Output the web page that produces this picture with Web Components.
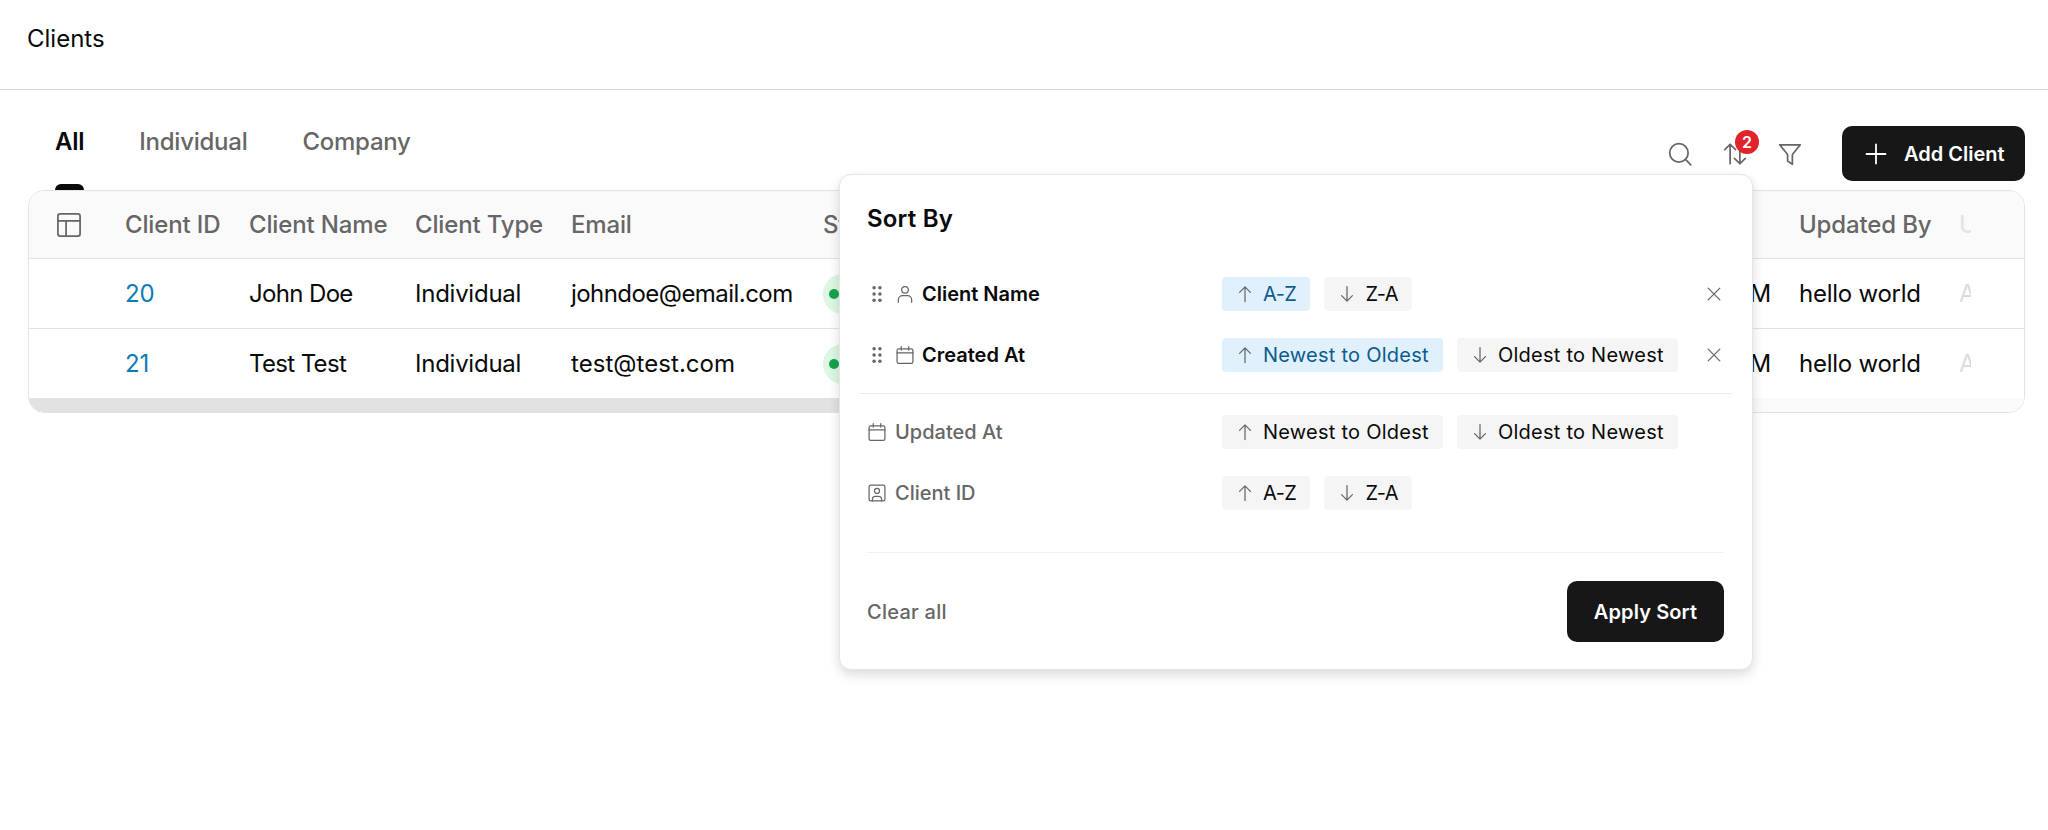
<!DOCTYPE html>
<html lang="en"><head><meta charset="utf-8"><title>Clients</title>
<style>
html,body{margin:0;padding:0;background:#fff}
body{font-family:Inter,"Noto Sans",sans-serif;color:#0a0a0a;position:relative;height:830px;overflow:hidden;font-size:24px;
--cols:96px 124px 166px 156px 252px 300px 676px 160px 12px 1fr}
</style></head><body>
<app-header>Clients</app-header>
<tab-toolbar>
  <tab-item active>All</tab-item><tab-item>Individual</tab-item><tab-item>Company</tab-item>
  <tool-bar slot="tools" badge="2"></tool-bar>
</tab-toolbar>
<client-table>
  <table-row head>
    <table-cell><ui-icon name="table" size="28" color="#666"></ui-icon></table-cell>
    <table-cell>Client ID</table-cell><table-cell>Client Name</table-cell><table-cell>Client Type</table-cell><table-cell>Email</table-cell>
    <table-cell>Status</table-cell><table-cell>Created At</table-cell><table-cell>Updated By</table-cell><table-cell clip>Updated At</table-cell><table-cell></table-cell>
  </table-row>
  <table-row>
    <table-cell></table-cell><table-cell link>20</table-cell><table-cell tight>John Doe</table-cell><table-cell>Individual</table-cell><table-cell mail>johndoe@email.com</table-cell>
    <table-cell><status-pill>Active</status-pill></table-cell><table-cell end>12:00 PM</table-cell><table-cell>hello world</table-cell><table-cell clip>Active</table-cell><table-cell></table-cell>
  </table-row>
  <table-row last>
    <table-cell></table-cell><table-cell link>21</table-cell><table-cell tight>Test Test</table-cell><table-cell>Individual</table-cell><table-cell wide>test@test.com</table-cell>
    <table-cell><status-pill>Active</status-pill></table-cell><table-cell end>12:00 PM</table-cell><table-cell>hello world</table-cell><table-cell clip>Active</table-cell><table-cell></table-cell>
  </table-row>
</client-table>
<sort-popover>
  <sort-row active icon="user" label="Client Name" a="A-Z" b="Z-A" on="a"></sort-row>
  <sort-row active icon="calendar" label="Created At" a="Newest to Oldest" b="Oldest to Newest" on="a"></sort-row>
  <sort-row slot="rest" icon="calendar" label="Updated At" a="Newest to Oldest" b="Oldest to Newest"></sort-row>
  <sort-row slot="rest" icon="idcard" label="Client ID" a="A-Z" b="Z-A"></sort-row>
</sort-popover>
<script>
const ICONS={
 table:'<rect x="2.5" y="2.5" width="19" height="19" rx="2"/><path d="M2.5 8.5h19M9.5 8.5v13"/>',
 user:'<circle cx="12" cy="7" r="4"/><path d="M4 22v-3a5 5 0 0 1 5-5h6a5 5 0 0 1 5 5v3"/>',
 calendar:'<rect x="2.5" y="4.5" width="19" height="17.5" rx="2"/><path d="M2.5 9.5h19M7.5 2v4M16.5 2v4"/>',
 idcard:'<rect x="2.5" y="2.5" width="19" height="19" rx="2"/><circle cx="12" cy="9.5" r="3"/><path d="M6.5 21.5v-2a3.5 3.5 0 0 1 3.5-3.5h4a3.5 3.5 0 0 1 3.5 3.5v2"/>',
 up:'<path d="M12 21V3.5M5.5 10 12 3.5 18.5 10"/>',
 down:'<path d="M12 3v17.5M5.5 14 12 20.5 18.5 14"/>',
 close:'<path d="M5 5l14 14M19 5 5 19"/>',
 plus:'<path d="M12 2.5v19M2.5 12h19"/>',
 search:'<circle cx="11" cy="11" r="8.5"/><path d="M17.5 17.5 22 22"/>',
 filter:'<path d="M2.5 3.5h19l-7.3 9v9l-4.4-3v-6z"/>',
 sort:'<path d="M7.5 21V3M2.5 8l5-5 5 5M16.5 3v18M11.5 16l5 5 5-5"/>',
 drag:'<g fill="currentColor" stroke="none"><circle cx="8.5" cy="4.5" r="2.1"/><circle cx="15.5" cy="4.5" r="2.1"/><circle cx="8.5" cy="12" r="2.1"/><circle cx="15.5" cy="12" r="2.1"/><circle cx="8.5" cy="19.5" r="2.1"/><circle cx="15.5" cy="19.5" r="2.1"/></g>'
};
function def(name,html){
  customElements.define(name,class extends HTMLElement{
    constructor(){super();this.attachShadow({mode:'open'}).innerHTML=html;}
  });
}
customElements.define('ui-icon',class extends HTMLElement{
  static get observedAttributes(){return ['name'];}
  connectedCallback(){this.draw();}
  attributeChangedCallback(){this.draw();}
  draw(){
    const s=this.getAttribute('size')||20,c=this.getAttribute('color')||'#666',w=this.getAttribute('stroke')||1.5;
    if(!this.shadowRoot)this.attachShadow({mode:'open'});
    this.shadowRoot.innerHTML=`<style>:host{display:inline-flex;flex:none;width:${s}px;height:${s}px;color:${c}}svg{display:block;width:100%;height:100%}</style><svg viewBox="0 0 24 24" fill="none" stroke="currentColor" stroke-width="${w}" stroke-linecap="round" stroke-linejoin="round">${ICONS[this.getAttribute('name')]||''}</svg>`;
  }
});
def('app-header',`<style>:host{display:flex;align-items:center;padding:0 27px 13px;box-sizing:border-box;height:90px;border-bottom:1px solid #d9d9d9;font-size:24px;font-weight:400;color:#0a0a0a}</style><slot></slot>`);
def('tab-toolbar',`<style>:host{display:flex;justify-content:space-between;height:100px;padding:0 23px 0 55px}
.tabs{display:flex;gap:55px}.tools{padding-top:36px}</style><div class="tabs"><slot></slot></div><div class="tools"><slot name="tools"></slot></div>`);
def('tab-item',`<style>:host{display:flex;flex-direction:column;justify-content:space-between;padding-top:37px;font-size:24px;line-height:30px;font-weight:500;color:#666;letter-spacing:-.25px}
:host([active]){color:#0a0a0a;font-weight:600}
i{display:none;height:6px;background:#0a0a0a;border-radius:6px 6px 0 0}:host([active]) i{display:block}</style><slot></slot><i></i>`);
def('tool-bar',`<style>:host{display:flex;align-items:center;height:55px}
.ic{position:relative;display:flex;width:24px;height:24px;margin-right:31px}
.ic ui-icon{margin:-1px}
b{position:absolute;left:12px;top:-12px;width:24px;height:24px;border-radius:50%;background:#e0242a;color:#fff;font:600 16px/24px Inter,sans-serif;text-align:center}
button{display:flex;align-items:center;gap:16px;width:183px;height:55px;margin-left:40px;padding:0 0 0 22px;box-sizing:border-box;border:0;border-radius:10px;background:#171717;color:#fff;font:600 20px Inter,sans-serif}
</style><span class="ic"><ui-icon name="search" size="26" stroke="1.6"></ui-icon></span><span class="ic"><ui-icon name="sort" size="26" stroke="1.6"></ui-icon><b>2</b></span><span class="ic" style="margin-right:0"><ui-icon name="filter" size="26" stroke="1.6"></ui-icon></span><button><ui-icon name="plus" size="24" color="#fff" stroke="1.8"></ui-icon>Add Client</button>`);
def('client-table',`<style>:host{display:block;margin:0 23px 0 28px;height:223px;box-sizing:border-box;border:1.5px solid #e3e3e3;border-radius:16px;overflow:hidden;position:relative;background:#fff}
.bar{height:14px;background:#fafafa}.bar i{display:block;height:100%;width:60%;background:#e2e2e2}</style><slot></slot><div class="bar"><i></i></div>`);
def('table-row',`<style>:host{display:grid;grid-template-columns:var(--cols);align-items:center;height:70px;border-bottom:1.5px solid #e3e3e3;box-sizing:border-box;font-size:24px;color:#0a0a0a;letter-spacing:-.25px}
:host([head]){height:68px;background:#fafafa;color:#666;font-weight:500;letter-spacing:-.15px}:host([last]){border-bottom:0;height:69px}</style><slot></slot>`);
def('table-cell',`<style>:host{display:block;white-space:nowrap;line-height:30px;min-width:0}
:host(:first-child){padding-left:26px;display:flex}
:host([link]){color:#0a7cb8}:host([mail]){letter-spacing:-.55px}:host([tight]){letter-spacing:-.65px}:host([wide]){letter-spacing:.05px}:host([end]){text-align:right;padding-right:28px}:host([clip]){overflow:hidden;opacity:.14}</style><slot></slot>`);
def('status-pill',`<style>:host{display:inline-flex;align-items:center;gap:8px;height:40px;padding:0 16px 0 6px;border-radius:20px;background:#dcf7e3;color:#15803d;font-size:20px;vertical-align:middle}
i{width:10px;height:10px;border-radius:50%;background:#16a34a}</style><i></i><slot></slot>`);
def('sort-popover',`<style>:host{position:absolute;left:839px;top:174px;width:914px;box-sizing:border-box;padding:29px 28px 27px 27px;background:#fff;border:1.5px solid #e5e5e5;border-radius:12px;box-shadow:0 5px 12px rgba(0,0,0,.14)}
h2{margin:0 0 43px;font:600 24px/30px Inter,sans-serif;color:#0a0a0a;letter-spacing:.2px}
.g{display:flex;flex-direction:column;gap:27px}
.d1{height:1px;background:#ececec;margin:21px -8px}
.d2{height:1px;background:#f0f0f0;margin:42px 0 28px}
.f{display:flex;justify-content:space-between;align-items:center}
span{font-size:20px;font-weight:500;color:#666;letter-spacing:.25px}
button{width:157px;height:61px;border:0;border-radius:10px;background:#171717;color:#fff;font:600 20px Inter,sans-serif;letter-spacing:.1px}
</style><h2>Sort By</h2><div class="g"><slot></slot></div><div class="d1"></div><div class="g"><slot name="rest"></slot></div><div class="d2"></div><div class="f"><span>Clear all</span><button>Apply Sort</button></div>`);
def('sort-chip',`<style>:host{display:inline-flex;align-items:center;gap:8px;height:34px;padding:0 14px 0 13px;border-radius:4px;background:#f5f5f5;color:#0a0a0a;font-size:20px;white-space:nowrap}
:host([on]){background:#e0f0fd;color:#0b5c8f}</style><ui-icon size="20" color="#666"></ui-icon><slot></slot>`);
customElements.define('sort-row',class extends HTMLElement{
  constructor(){super();
    const g=k=>this.getAttribute(k)||'',act=this.hasAttribute('active');
    const ls=t=>t.length>5?'letter-spacing:.25px':'letter-spacing:-.5px';
    this.attachShadow({mode:'open'}).innerHTML=`<style>:host{display:grid;grid-template-columns:355px 1fr auto;align-items:center;height:34px}
.l{display:flex;align-items:center;gap:8px;font-size:20px;font-weight:${act?600:500};color:${act?'#0a0a0a':'#666'}}
.c{display:flex;gap:14px}.s{margin-right:-1px}</style>
<div class="l">${act?'<ui-icon name="drag" size="20"></ui-icon>':''}<ui-icon name="${g('icon')}" size="20" class="${act?'s':''}"></ui-icon><span>${g('label')}</span></div>
<div class="c"><sort-chip dir="up" style="${ls(g('a'))}" ${g('on')=='a'?'on':''}>${g('a')}</sort-chip><sort-chip dir="down" style="${ls(g('b'))}">${g('b')}</sort-chip></div>
${act?'<ui-icon name="close" size="20"></ui-icon>':''}`;
    this.shadowRoot.querySelectorAll('sort-chip').forEach(c=>c.shadowRoot.querySelector('ui-icon').setAttribute('name',c.getAttribute('dir')));
  }
});
</script>
</body></html>
